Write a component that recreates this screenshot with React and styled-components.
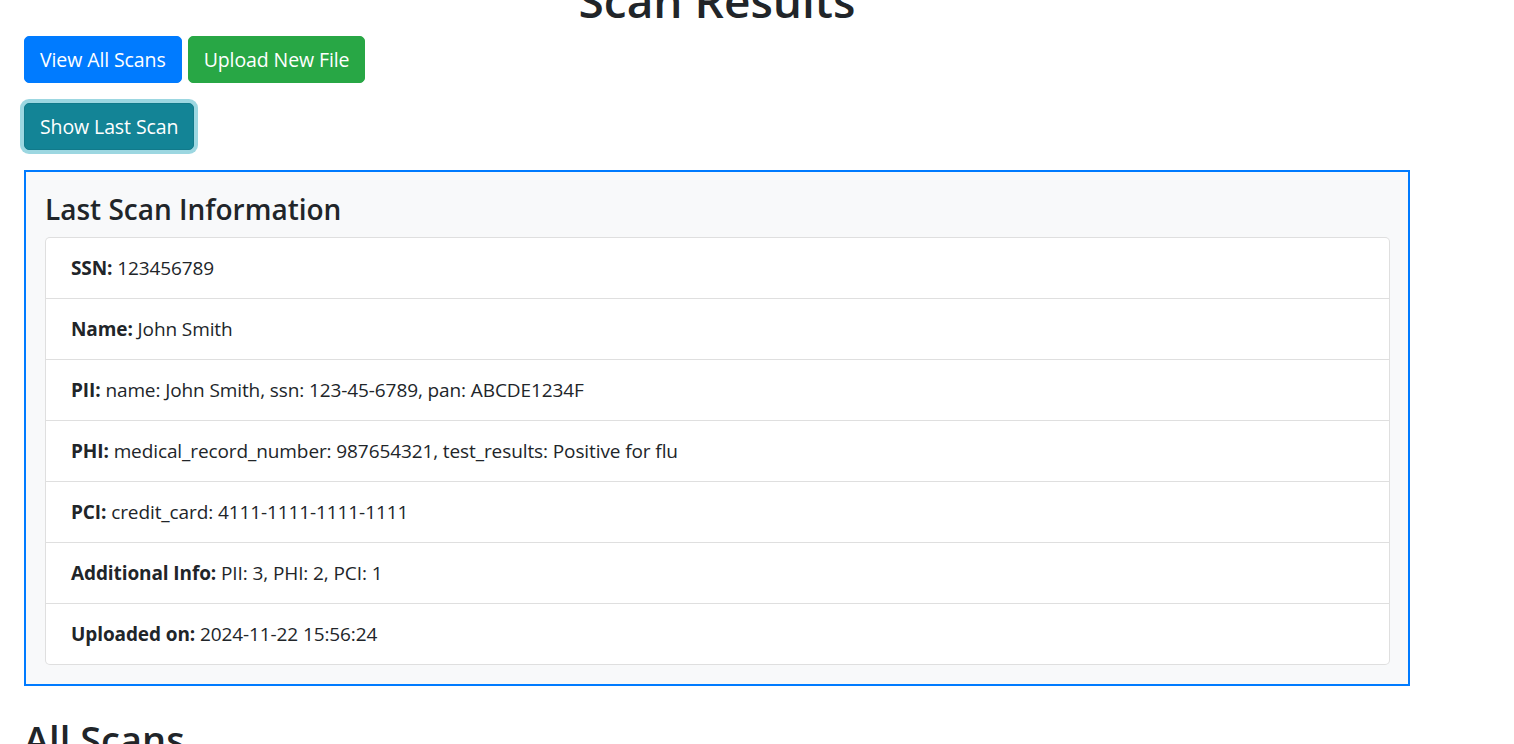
import React from "react";
import styled, { createGlobalStyle } from "styled-components";

const FONT = `"Open Sans", "Noto Sans", "Liberation Sans", sans-serif`;

const GlobalStyle = createGlobalStyle`
  html, body { margin: 0; padding: 0; background: #fff; }
  body {
    font-family: ${FONT};
    font-size: 19px;
    letter-spacing: -0.1px;
    line-height: 30px;
    color: #212529;
    overflow: hidden;
  }
  * { box-sizing: border-box; }
`;

const Page = styled.div`
  padding-left: 24px;
  width: 1410px;
`;

const Title = styled.h1`
  margin: -30px 0 6px;
  font-size: 46px;
  font-weight: 600;
  line-height: 60px;
  letter-spacing: 0;
  text-align: center;
`;

const ButtonRow = styled.div`
  display: flex;
  gap: 6px;
  margin-bottom: 20px;
`;

const variants = {
  primary: { bg: "#007bff", border: "#007bff", ring: "none" },
  success: { bg: "#28a745", border: "#28a745", ring: "none" },
  info: {
    bg: "#138496",
    border: "#117a8b",
    ring: "0 0 0 4px rgba(58, 176, 195, 0.5)",
  },
};

const Button = styled.button`
  font-family: ${FONT};
  font-size: 19.5px;
  letter-spacing: -0.1px;
  line-height: 30px;
  font-weight: 400;
  color: #fff;
  padding: 7.5px 15px;
  border-radius: 5px;
  border: 1.25px solid ${(p) => variants[p.$variant].border};
  background: ${(p) => variants[p.$variant].bg};
  box-shadow: ${(p) => variants[p.$variant].ring};
  cursor: pointer;
`;

const InfoBox = styled.section`
  border: 2px solid #007bff;
  background: #f8f9fa;
  padding: 19px 18px 19px 19px;
  margin-bottom: 31px;
`;

const BoxHeading = styled.h4`
  margin: 0 0 10px;
  font-size: 28px;
  font-weight: 600;
  line-height: 36px;
  letter-spacing: 0;
`;

const List = styled.ul`
  list-style: none;
  margin: 0;
  padding: 0;
  background: #fff;
  border: 1.25px solid rgba(0, 0, 0, 0.125);
  border-radius: 5px;
`;

const Item = styled.li`
  padding: 15px 25px;
  line-height: 30px;
  & + & {
    border-top: 1.25px solid rgba(0, 0, 0, 0.125);
  }
`;

const Label = styled.strong`
  font-weight: 700;
`;

const SectionHeading = styled.h2`
  margin: 0;
  font-size: 38px;
  font-weight: 600;
  line-height: 1.2;
  letter-spacing: 0;
`;

const rows = [
  ["SSN:", "123456789"],
  ["Name:", "John Smith"],
  ["PII:", "name: John Smith, ssn: 123-45-6789, pan: ABCDE1234F"],
  ["PHI:", "medical_record_number: 987654321, test_results: Positive for flu"],
  ["PCI:", "credit_card: 4111-1111-1111-1111"],
  ["Additional Info:", "PII: 3, PHI: 2, PCI: 1"],
  ["Uploaded on:", "2024-11-22 15:56:24"],
];

export default function App() {
  return (
    <>
      <GlobalStyle />
      <Page>
        <Title>Scan Results</Title>
        <ButtonRow>
          <Button $variant="primary">View All Scans</Button>
          <Button $variant="success">Upload New File</Button>
        </ButtonRow>
        <ButtonRow>
          <Button $variant="info">Show Last Scan</Button>
        </ButtonRow>
        <InfoBox>
          <BoxHeading>Last Scan Information</BoxHeading>
          <List>
            {rows.map(([label, value]) => (
              <Item key={label}>
                <Label>{label}</Label> {value}
              </Item>
            ))}
          </List>
        </InfoBox>
        <SectionHeading>All Scans</SectionHeading>
      </Page>
    </>
  );
}
